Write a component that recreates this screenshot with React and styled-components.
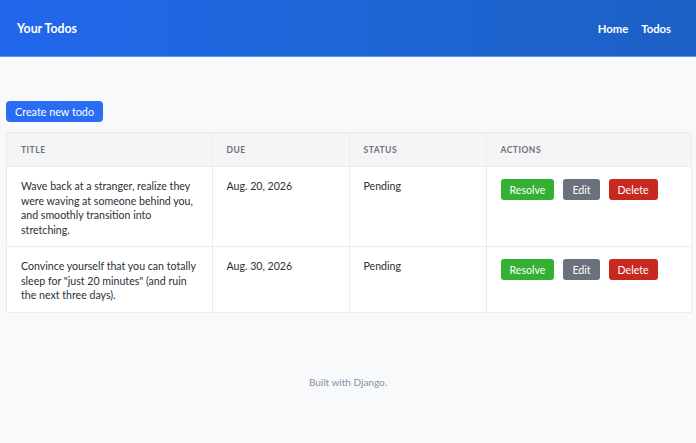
import React from 'react'
import styled, { createGlobalStyle } from 'styled-components'

const todos = [
  {
    id: 1,
    title:
      'Wave back at a stranger, realize they were waving at someone behind you, and smoothly transition into stretching.',
    due: 'Aug. 20, 2026',
    status: 'Pending',
  },
  {
    id: 2,
    title:
      'Convince yourself that you can totally sleep for "just 20 minutes" (and ruin the next three days).',
    due: 'Aug. 30, 2026',
    status: 'Pending',
  },
]

const GlobalStyle = createGlobalStyle`
  html, body {
    margin: 0;
    padding: 0;
    background: #f8f9fb;
    font-family: Lato, "Open Sans", sans-serif;
    color: #2b2f36;
  }
`

function App() {
  return (
    <>
      <GlobalStyle />
      <Page>
        <Header>
          <Brand>Your Todos</Brand>
          <Nav>
            <NavLink href="#">Home</NavLink>
            <NavLink href="#">Todos</NavLink>
          </Nav>
        </Header>
        <Main>
          <CreateButton type="button">Create new todo</CreateButton>
          <Table>
            <thead>
              <tr>
                <Th style={{ width: '30%' }}>Title</Th>
                <Th style={{ width: '20%' }}>Due</Th>
                <Th style={{ width: '20%' }}>Status</Th>
                <Th>Actions</Th>
              </tr>
            </thead>
            <tbody>
              {todos.map((todo) => (
                <tr key={todo.id}>
                  <Td>{todo.title}</Td>
                  <Td>{todo.due}</Td>
                  <Td>{todo.status}</Td>
                  <Td>
                    <Actions>
                      <ActionButton $variant="resolve">Resolve</ActionButton>
                      <ActionButton $variant="edit">Edit</ActionButton>
                      <ActionButton $variant="delete">Delete</ActionButton>
                    </Actions>
                  </Td>
                </tr>
              ))}
            </tbody>
          </Table>
        </Main>
        <Footer>Built with Django.</Footer>
      </Page>
    </>
  )
}

const Page = styled.div`
  min-height: 443px;
  display: flex;
  flex-direction: column;
`

const Header = styled.header`
  height: 56px;
  display: flex;
  align-items: center;
  justify-content: space-between;
  padding: 0 25px 0 17px;
  background: linear-gradient(90deg, #2266ec 0%, #1f66d6 50%, #1c60c5 100%);
  border-bottom: 1px solid #5d95ee;
`

const Brand = styled.div`
  color: #ffffff;
  font-size: 12.3px;
  font-weight: 700;
`

const Nav = styled.nav`
  display: flex;
  gap: 13px;
`

const NavLink = styled.a`
  color: #ffffff;
  font-size: 11.3px;
  font-weight: 700;
  text-decoration: none;
`

const Main = styled.main`
  padding: 44px 4px 0 6px;
`

const CreateButton = styled.button`
  display: block;
  height: 21px;
  padding: 0 9px;
  border: none;
  border-radius: 4px;
  background: #2b6cf5;
  color: #ffffff;
  font-family: inherit;
  font-size: 10.8px;
  cursor: pointer;
`

const Table = styled.table`
  width: 100%;
  margin-top: 10px;
  border-collapse: collapse;
  background: #ffffff;
  border: 1px solid #ececec;
`

const Th = styled.th`
  height: 33px;
  padding: 0 14px;
  text-align: left;
  background: #f5f5f5;
  border: 1px solid #ececec;
  color: #6a7280;
  font-size: 8.5px;
  font-weight: 700;
  letter-spacing: 0.5px;
  text-transform: uppercase;
`

const Td = styled.td`
  padding: 12px 14px 9px;
  vertical-align: top;
  border: 1px solid #ececec;
  font-size: 10.6px;
  line-height: 14.5px;
`

const Actions = styled.div`
  display: flex;
  gap: 9px;
`

const buttonColors = {
  resolve: '#34b034',
  edit: '#69717c',
  delete: '#c8291f',
}

const ActionButton = styled.button`
  height: 21px;
  padding: 0 9px;
  border: none;
  border-radius: 3px;
  background: ${(p) => buttonColors[p.$variant]};
  color: #ffffff;
  font-family: inherit;
  font-size: 10.6px;
  cursor: pointer;
`

const Footer = styled.footer`
  margin-top: 63px;
  text-align: center;
  color: #8791a3;
  font-size: 10px;
`

export default App
